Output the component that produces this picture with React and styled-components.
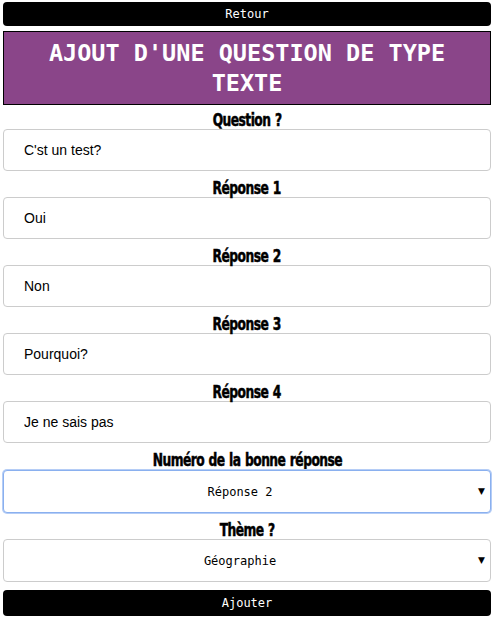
import React from "react";
import styled, { createGlobalStyle } from "styled-components";

const Global = createGlobalStyle`
  html, body { margin: 0; padding: 0; background: #fff; }
  body { font-family: "Liberation Sans", Arial, sans-serif; }
`;

const Page = styled.div`
  width: 488px;
  margin: 2px 0 0 3px;
  display: flex;
  flex-direction: column;
`;

const DarkButton = styled.button`
  display: block;
  width: 100%;
  height: ${(p) => p.$h || 24}px;
  background: #000;
  color: #fff;
  border: none;
  border-radius: 4px;
  font-family: "DejaVu Sans Mono", "Liberation Mono", monospace;
  font-size: 12px;
  padding: 0;
  cursor: pointer;
  margin-top: ${(p) => p.$mt || 0}px;
`;

const TitleBox = styled.h1`
  margin: 5px 0 0;
  background: #8a4589;
  border: 1px solid #000;
  color: #fff;
  font-family: "DejaVu Sans Mono", "Liberation Mono", monospace;
  font-weight: bold;
  font-size: 23.5px;
  line-height: 30px;
  text-align: center;
  padding: 6px 20px 6px;
`;

const Field = styled.div`
  display: flex;
  flex-direction: column;
`;

const Label = styled.label`
  display: block;
  text-align: center;
  height: 18px;
  line-height: 18px;
  margin-top: ${(p) => p.$mt ?? 8}px;
`;

const LabelText = styled.span`
  display: inline-block;
  font-family: "DejaVu Sans", sans-serif;
  font-stretch: condensed;
  font-weight: 900;
  font-size: 17.5px;
  line-height: 18px;
  color: #000;
  letter-spacing: -0.7px;
  word-spacing: 1px;
  -webkit-text-stroke: 0.5px #000;
  transform: scaleX(0.78);
  transform-origin: center;
  white-space: nowrap;
`;

const TextInput = styled.input`
  box-sizing: border-box;
  width: 100%;
  height: 42px;
  border: 1px solid #ccc;
  border-radius: 4px;
  padding: 0 20px;
  font-family: "Liberation Sans", Arial, sans-serif;
  font-size: 14px;
  color: #000;
  outline: none;
  background: #fff;
`;

const SelectWrap = styled.div`
  position: relative;
  width: 100%;
  margin-top: ${(p) => (p.$focused ? 1 : 0)}px;
`;

const Select = styled.select`
  display: block;
  box-sizing: border-box;
  width: 100%;
  height: 43px;
  border: 1px solid ${(p) => (p.$focused ? "#8ab0ef" : "#ccc")};
  box-shadow: ${(p) => (p.$focused ? "0 0 0 1px #b5cdf6" : "none")};
  border-radius: 4px;
  appearance: none;
  -webkit-appearance: none;
  background: #fff;
  text-align: center;
  text-align-last: center;
  font-family: "DejaVu Sans Mono", "Liberation Mono", monospace;
  font-size: 12px;
  color: #000;
  padding: 0 20px 0 6px;
  outline: none;
`;

const Arrow = styled.span`
  position: absolute;
  right: 6px;
  top: 50%;
  transform: translateY(-58%);
  font-size: 9px;
  color: #000;
  pointer-events: none;
  font-family: "DejaVu Sans", sans-serif;
`;

const answers = [
  { label: "Question ?", value: "C'st un test?", mt: 6 },
  { label: "Réponse 1", value: "Oui" },
  { label: "Réponse 2", value: "Non" },
  { label: "Réponse 3", value: "Pourquoi?" },
  { label: "Réponse 4", value: "Je ne sais pas" },
];

export default function App() {
  return (
    <>
      <Global />
      <Page>
        <DarkButton>Retour</DarkButton>
        <TitleBox>AJOUT D'UNE QUESTION DE TYPE TEXTE</TitleBox>
        {answers.map((a) => (
          <Field key={a.label}>
            <Label $mt={a.mt}>
              <LabelText>{a.label}</LabelText>
            </Label>
            <TextInput defaultValue={a.value} />
          </Field>
        ))}
        <Field>
          <Label>
            <LabelText>Numéro de la bonne réponse</LabelText>
          </Label>
          <SelectWrap $focused>
            <Select $focused defaultValue="2">
              <option value="1">Réponse 1</option>
              <option value="2">Réponse 2</option>
              <option value="3">Réponse 3</option>
              <option value="4">Réponse 4</option>
            </Select>
            <Arrow>▼</Arrow>
          </SelectWrap>
        </Field>
        <Field>
          <Label $mt={8}>
            <LabelText>Thème ?</LabelText>
          </Label>
          <SelectWrap>
            <Select defaultValue="geo">
              <option value="geo">Géographie</option>
              <option value="hist">Histoire</option>
            </Select>
            <Arrow>▼</Arrow>
          </SelectWrap>
        </Field>
        <DarkButton $mt={8} $h={26}>Ajouter</DarkButton>
      </Page>
    </>
  );
}
